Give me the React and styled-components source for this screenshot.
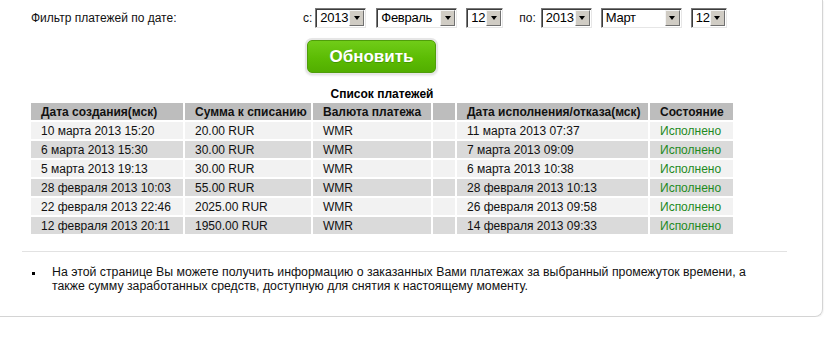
import React from "react";
import styled, { createGlobalStyle } from "styled-components";

const Global = createGlobalStyle`
  html, body { margin: 0; padding: 0; background: #fff; }
  body { font-family: "Liberation Sans", Arial, sans-serif; font-size: 12px; color: #111; }
`;

const Panel = styled.div`
  box-sizing: border-box;
  width: 823px;
  height: 317px;
  padding-top: 8px;
  border-right: 1px solid #d4d4d4;
  border-bottom: 1px solid #d4d4d4;
  border-bottom-right-radius: 8px;
  box-shadow: 1px 1px 1px rgba(0, 0, 0, 0.04);
`;

const FilterRow = styled.div`
  display: flex;
  align-items: center;
  height: 20px;
  padding-left: 31px;
`;

const FilterLabel = styled.div`
  width: 272px;
  font-size: 12px;
  color: #111;
`;

const Controls = styled.div`
  display: flex;
  align-items: center;
`;

const Prefix = styled.span`
  font-size: 12px;
  color: #111;
  margin-right: ${(p) => p.$gap}px;
`;

const SelectBox = styled.div`
  box-sizing: border-box;
  display: flex;
  align-items: stretch;
  width: ${(p) => p.$w}px;
  height: 20px;
  margin-right: ${(p) => p.$gap || 0}px;
  background: #fff;
  border-top: 1px solid #7b7b7b;
  border-left: 1px solid #7b7b7b;
  border-right: 1px solid #e6e6e6;
  border-bottom: 1px solid #e6e6e6;
  box-shadow: inset 1px 1px 0 #3c3c3c;
  padding: 1px 1px 1px 2px;
`;

const SelectValue = styled.span`
  flex: 1;
  font-size: 13px;
  line-height: 16px;
  padding-left: 2px;
  color: #000;
  letter-spacing: -0.3px;
  white-space: nowrap;
  overflow: hidden;
`;

const ArrowBtn = styled.span`
  box-sizing: border-box;
  width: 15px;
  display: flex;
  align-items: center;
  justify-content: center;
  background: #d0ccc4;
  border-top: 1px solid #f4f4f4;
  border-left: 1px solid #f4f4f4;
  border-right: 1px solid #707070;
  border-bottom: 1px solid #707070;
  &::after {
    content: "";
    width: 0;
    height: 0;
    border-left: 3.5px solid transparent;
    border-right: 3.5px solid transparent;
    border-top: 4px solid #000;
  }
`;

const ButtonRow = styled.div`
  padding: 12px 0 0 307px;
`;

const RefreshButton = styled.button`
  box-sizing: border-box;
  width: 129px;
  height: 33px;
  border: 1px solid #4f9e0a;
  border-radius: 5px;
  background: linear-gradient(#70cc18, #5cbc04 55%, #52ae00);
  box-shadow: 0 0 0 2px #e6e6e6, 0 1px 2px 2px rgba(0, 0, 0, 0.08);
  color: #fff;
  font-family: "Liberation Sans", Arial, sans-serif;
  font-weight: bold;
  font-size: 17px;
  padding: 0;
  cursor: pointer;
  text-shadow: 0 1px 0 rgba(0, 60, 0, 0.25);
`;

const Table = styled.table`
  margin: 14px 0 0 29px;
  width: 706px;
  table-layout: fixed;
  border-collapse: separate;
  border-spacing: 2px;
  font-size: 12px;
`;

const Caption = styled.caption`
  font-weight: bold;
  font-size: 12px;
  line-height: 14px;
  color: #000;
`;

const Th = styled.th`
  background: #bdbdbd;
  height: 17px;
  padding: 0 0 0 10px;
  text-align: left;
  font-weight: bold;
  color: #111;
  white-space: nowrap;
  overflow: hidden;
`;

const Td = styled.td`
  background: ${(p) => (p.$alt ? "#dadada" : "#f2f2f2")};
  height: 17px;
  padding: 0 0 0 10px;
  color: ${(p) => (p.$ok ? "#1f8a1f" : "#111")};
  white-space: nowrap;
  overflow: hidden;
`;

const Col = styled.col`
  width: ${(p) => p.$w}px;
`;

const Separator = styled.div`
  margin: 15px 0 0 22px;
  width: 765px;
  border-top: 1px solid #e2e2e2;
`;

const Notes = styled.ul`
  list-style: none;
  margin: 13px 0 0 0;
  padding: 0;
`;

const NoteItem = styled.li`
  display: flex;
  align-items: flex-start;
`;

const Marker = styled.span`
  flex: none;
  width: 3px;
  height: 3px;
  background: #000;
  margin: 7px 17px 0 32px;
`;

const NoteText = styled.span`
  width: 710px;
  font-size: 12.3px;
  line-height: 14px;
  color: #111;
`;

const cols = [152, 126, 118, 22, 191, 83];

const rows = [
  ["10 марта 2013 15:20", "20.00 RUR", "WMR", "11 марта 2013 07:37"],
  ["6 марта 2013 15:30", "30.00 RUR", "WMR", "7 марта 2013 09:09"],
  ["5 марта 2013 19:13", "30.00 RUR", "WMR", "6 марта 2013 10:38"],
  ["28 февраля 2013 10:03", "55.00 RUR", "WMR", "28 февраля 2013 10:13"],
  ["22 февраля 2013 22:46", "2025.00 RUR", "WMR", "26 февраля 2013 09:58"],
  ["12 февраля 2013 20:11", "1950.00 RUR", "WMR", "14 февраля 2013 09:33"],
];

function Select({ value, w, gap }) {
  return (
    <SelectBox $w={w} $gap={gap}>
      <SelectValue>{value}</SelectValue>
      <ArrowBtn />
    </SelectBox>
  );
}

export default function App() {
  return (
    <>
      <Global />
      <Panel>
        <FilterRow>
          <FilterLabel>Фильтр платежей по дате:</FilterLabel>
          <Controls>
            <Prefix $gap={3}>с:</Prefix>
            <Select value="2013" w={51} gap={10} />
            <Select value="Февраль" w={81} gap={9} />
            <Select value="12" w={37} gap={16} />
            <Prefix $gap={5}>по:</Prefix>
            <Select value="2013" w={51} gap={9} />
            <Select value="Март" w={81} gap={9} />
            <Select value="12" w={36} />
          </Controls>
        </FilterRow>
        <ButtonRow>
          <RefreshButton>Обновить</RefreshButton>
        </ButtonRow>
        <Table>
          <Caption>Список платежей</Caption>
          <colgroup>
            {cols.map((c, i) => (
              <Col key={i} $w={c} />
            ))}
          </colgroup>
          <thead>
            <tr>
              <Th>Дата создания(мск)</Th>
              <Th>Сумма к списанию</Th>
              <Th>Валюта платежа</Th>
              <Th />
              <Th>Дата исполнения/отказа(мск)</Th>
              <Th>Состояние</Th>
            </tr>
          </thead>
          <tbody>
            {rows.map((r, i) => (
              <tr key={i}>
                <Td $alt={i % 2 === 1}>{r[0]}</Td>
                <Td $alt={i % 2 === 1}>{r[1]}</Td>
                <Td $alt={i % 2 === 1}>{r[2]}</Td>
                <Td $alt={i % 2 === 1} />
                <Td $alt={i % 2 === 1}>{r[3]}</Td>
                <Td $alt={i % 2 === 1} $ok>
                  Исполнено
                </Td>
              </tr>
            ))}
          </tbody>
        </Table>
        <Separator />
        <Notes>
          <NoteItem>
            <Marker />
            <NoteText>
              На этой странице Вы можете получить информацию о заказанных Вами
              платежах за выбранный промежуток времени, а также сумму
              заработанных средств, доступную для снятия к настоящему моменту.
            </NoteText>
          </NoteItem>
        </Notes>
      </Panel>
    </>
  );
}
